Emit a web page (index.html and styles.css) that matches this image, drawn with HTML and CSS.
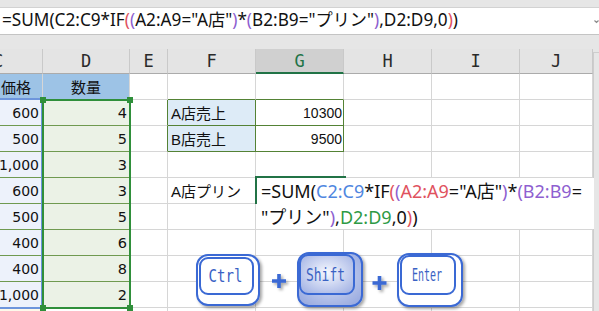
FILE: index.html
```html
<!DOCTYPE html>
<html lang="ja">
<head>
<meta charset="utf-8">
<title>Excel 配列数式</title>
<link rel="stylesheet" href="styles.css">
</head>
<body>
<div class="app">
  <div class="fbar">
    <div class="ftext">=SUM(C2:C9*IF<span class="r-r">(</span><span class="r-p">(</span>A2:A9="A店"<span class="r-p">)</span>*<span class="r-p">(</span>B2:B9="プリン"<span class="r-p">)</span>,D2:D9,0<span class="r-r">)</span>)</div>
    <svg class="fexp" width="5" height="6" viewBox="0 0 5 6"><path d="M0.5 1.5 L2.5 3.5 L4.5 1.5" fill="none" stroke="#8a8a8a" stroke-width="1.2"/></svg>
  </div>
  <div class="sheet">
    <div class="grid">
      <div class="hd hd-c"><span>C</span></div>
      <div class="hd">D</div>
      <div class="hd">E</div>
      <div class="hd">F</div>
      <div class="hd hd-act">G</div>
      <div class="hd">H</div>
      <div class="hd">I</div>
      <div class="hd">J</div>

      <div class="c th th-c">価格</div>
      <div class="c th th-d">数量</div>
      <div class="c"></div>
      <div class="c tt"></div>
      <div class="c tt"></div>
      <div class="c"></div>
      <div class="c"></div>
      <div class="c"></div>

      <div class="c cc">600</div>
      <div class="c cd">4</div>
      <div class="c tl"></div>
      <div class="c tb tbl">A店売上</div>
      <div class="c tb gnum">10300</div>
      <div class="c"></div>
      <div class="c"></div>
      <div class="c"></div>

      <div class="c cc">500</div>
      <div class="c cd">5</div>
      <div class="c tl"></div>
      <div class="c tb tbl">B店売上</div>
      <div class="c tb gnum">9500</div>
      <div class="c"></div>
      <div class="c"></div>
      <div class="c"></div>

      <div class="c cc">1,000</div>
      <div class="c cd">3</div>
      <div class="c"></div>
      <div class="c"></div>
      <div class="c"></div>
      <div class="c"></div>
      <div class="c"></div>
      <div class="c"></div>

      <div class="c cc">600</div>
      <div class="c cd">3</div>
      <div class="c"></div>
      <div class="c">A店プリン</div>
      <div class="c"></div>
      <div class="c"></div>
      <div class="c"></div>
      <div class="c"></div>

      <div class="c cc">500</div>
      <div class="c cd">5</div>
      <div class="c"></div>
      <div class="c"></div>
      <div class="c"></div>
      <div class="c"></div>
      <div class="c"></div>
      <div class="c"></div>

      <div class="c cc">400</div>
      <div class="c cd">6</div>
      <div class="c"></div>
      <div class="c"></div>
      <div class="c"></div>
      <div class="c"></div>
      <div class="c"></div>
      <div class="c"></div>

      <div class="c cc">400</div>
      <div class="c cd">8</div>
      <div class="c"></div>
      <div class="c"></div>
      <div class="c"></div>
      <div class="c"></div>
      <div class="c"></div>
      <div class="c"></div>

      <div class="c cc">1,000</div>
      <div class="c cd">2</div>
      <div class="c"></div>
      <div class="c"></div>
      <div class="c"></div>
      <div class="c"></div>
      <div class="c"></div>
      <div class="c"></div>

      <div class="c c-next"></div>
      <div class="c"></div>
      <div class="c"></div>
      <div class="c"></div>
      <div class="c"></div>
      <div class="c"></div>
      <div class="c"></div>
      <div class="c"></div>
    </div>
    <div class="vscroll"></div>
  </div>

  <div class="ref ref-c"></div>
  <div class="ref ref-d">
    <i class="hdl h-tl"></i><i class="hdl h-tr"></i><i class="hdl h-bl"></i><i class="hdl h-br"></i>
  </div>
  <div class="active"></div>
  <div class="edit">=SUM(<span class="r-b">C2:C9</span>*IF<span class="r-r">(</span><span class="r-p">(</span><span class="r-r">A2:A9</span>="A店"<span class="r-p">)</span>*<span class="r-p">(</span><span class="r-p">B2:B9</span>=<br>"プリン"<span class="r-p">)</span>,<span class="r-g">D2:D9</span>,0<span class="r-r">)</span>)</div>

  <svg class="keys" width="272" height="60" viewBox="0 0 272 60">
    <defs>
      <filter id="sh" x="-20%" y="-20%" width="150%" height="150%">
        <feDropShadow dx="2" dy="2" stdDeviation="1.6" flood-color="#000" flood-opacity="0.35"/>
      </filter>
      <radialGradient id="sg" cx="50%" cy="45%" r="62%">
        <stop offset="0" stop-color="#f6f8fe"/>
        <stop offset="1" stop-color="#a8b7e6"/>
      </radialGradient>
      <radialGradient id="sg2" cx="50%" cy="45%" r="65%">
        <stop offset="0" stop-color="#dae2f7"/>
        <stop offset="1" stop-color="#9aabe0"/>
      </radialGradient>
    </defs>
    <!-- Ctrl -->
    <rect x="3" y="5" width="62" height="50" rx="11" fill="#fff" stroke="#3a69d4" stroke-width="2" filter="url(#sh)"/>
    <rect x="6" y="8" width="53" height="36" rx="8" fill="#fff" stroke="#3a69d4" stroke-width="2"/>
    <text class="ktext" x="31.5" y="32" text-anchor="middle" textLength="34" lengthAdjust="spacingAndGlyphs">Ctrl</text>
    <!-- plus -->
    <path d="M78 31h14M85 24v14" stroke="#3a69d4" stroke-width="3.6" filter="url(#sh)"/>
    <!-- Shift -->
    <rect x="104" y="3" width="64" height="53" rx="11" fill="url(#sg2)" stroke="#3a69d4" stroke-width="2" filter="url(#sh)"/>
    <rect x="106" y="5" width="54" height="39" rx="8" fill="url(#sg)" stroke="#3a69d4" stroke-width="2"/>
    <text class="ktext" x="131.5" y="31" text-anchor="middle" textLength="39" lengthAdjust="spacingAndGlyphs">Shift</text>
    <!-- plus -->
    <path d="M178.5 33h14M185.5 26v14" stroke="#3a69d4" stroke-width="3.6" filter="url(#sh)"/>
    <!-- Enter -->
    <rect x="204" y="4" width="64" height="52" rx="11" fill="#fff" stroke="#3a69d4" stroke-width="2" filter="url(#sh)"/>
    <rect x="207" y="6" width="54" height="38" rx="8" fill="#fff" stroke="#3a69d4" stroke-width="2"/>
    <text class="ktext kenter" x="233" y="30.5" text-anchor="middle" textLength="30" lengthAdjust="spacingAndGlyphs">Enter</text>
  </svg>
</div>
</body>
</html>
```

FILE: styles.css
```css
html, body {
  margin: 0;
  padding: 0;
  height: 100%;
  overflow: hidden;
}

body {
  background: #e6e6e6;
}

.app {
  position: relative;
  width: 599px;
  height: 311px;
  overflow: hidden;
}

/* formula bar */
.fbar {
  margin-top: 7px;
  height: 28px;
  box-sizing: border-box;
  background: #fff;
  border-top: 1px solid #d2d2d2;
  border-bottom: 1px solid #c4c4c4;
  display: flex;
  align-items: flex-start;
  padding-left: 2px;
}

.ftext {
  font: 17.2px "Noto Sans", "Noto Sans CJK JP", sans-serif;
  line-height: 24px;
  white-space: nowrap;
  color: #111;
}

.fexp {
  margin-left: auto;
  margin-top: 11px;
}

/* sheet */
.sheet {
  margin-top: 14px;
  display: flex;
}

.grid {
  display: grid;
  grid-template-columns: 43px 87px 38px 88px 88px 88px 88px 73px;
  grid-template-rows: 25px;
  grid-auto-rows: 26px;
  width: 593px;
  flex: none;
}

.vscroll {
  flex: 1;
  margin-top: 3px;
  border-left: 1px solid #cdcdcd;
  border-top: 1px solid #cdcdcd;
}

.hd {
  box-sizing: border-box;
  background: #e4e4e4;
  border-right: 1px solid #c9c9c9;
  border-bottom: 1px solid #ababab;
  display: flex;
  align-items: center;
  justify-content: center;
  font: 17px "DejaVu Sans Mono", monospace;
  color: #2a2a2a;
  overflow: hidden;
}

.hd-c {
  justify-content: flex-start;
}

.hd-c span {
  margin-left: -7px;
}

.hd-act {
  background: #d0d0d0;
  color: #217346;
  border-bottom: 2px solid #217346;
}

.c {
  box-sizing: border-box;
  border-right: 1px solid #d6d6d6;
  border-bottom: 1px solid #d6d6d6;
  background: #fff;
  display: flex;
  align-items: center;
  padding: 0 3px;
  font: 15px "Liberation Sans", "Noto Sans CJK JP", sans-serif;
  color: #111;
  white-space: nowrap;
  overflow: hidden;
}

.th {
  background: #9dc3e6;
  border-bottom-color: #6f9a50;
}

.th-c {
  padding-left: 1px;
}

.th-d {
  justify-content: center;
}

.cc, .cd {
  justify-content: flex-end;
  font-family: "DejaVu Sans", sans-serif;
  font-size: 14px;
  border-bottom-color: #6f9a50;
}

.cc {
  background: #edf2fb;
  padding-left: 0;
  padding-right: 3px;
}

.cd {
  background: #ebf2e6;
  padding-right: 2px;
  font-size: 14.5px;
}

.c-next {
  background: #fdf9ea;
}

.tb {
  border-right-color: #548235;
  border-bottom-color: #548235;
}

.tbl {
  background: #ddebf7;
}

.tl {
  border-right-color: #548235;
}

.tt {
  border-bottom-color: #548235;
}

.gnum {
  justify-content: flex-end;
  font-size: 14px;
  padding-right: 1px;
}

/* reference highlights drawn over the grid */
.ref {
  position: absolute;
  box-sizing: border-box;
}

.ref-c {
  left: -3px;
  top: 98px;
  width: 46px;
  height: 211px;
  border: 2px solid #6d95dc;
}

.ref-d {
  left: 42px;
  top: 99px;
  width: 89px;
  height: 210px;
  border: 2px solid #2f8f3a;
}

.hdl {
  position: absolute;
  width: 6px;
  height: 6px;
  background: #2f8f3a;
}

.h-tl { left: -4px; top: -4px; }
.h-tr { right: -4px; top: -4px; }
.h-bl { left: -4px; bottom: -4px; }
.h-br { right: -4px; bottom: -4px; }

/* active cell & in-cell editor */
.active {
  position: absolute;
  left: 255px;
  top: 176px;
  width: 91px;
  height: 28px;
  box-sizing: border-box;
  border-top: 2px solid #217346;
  border-left: 2px solid #217346;
}

.edit {
  position: absolute;
  left: 257px;
  top: 178px;
  width: 337px;
  height: 51px;
  background: #fff;
  padding-left: 4px;
  box-sizing: border-box;
  font: 18px "Noto Sans", "Noto Sans CJK JP", sans-serif;
  line-height: 26px;
  white-space: nowrap;
  overflow: hidden;
  color: #111;
}

.r-b { color: #4f86e0; }
.r-r { color: #e0525e; }
.r-p { color: #8e5fd0; }
.r-g { color: #2e9a45; }

/* keyboard keys */
.keys {
  position: absolute;
  left: 194px;
  top: 250px;
  overflow: visible;
}

.ktext {
  font: 17px "DejaVu Sans Mono", monospace;
  fill: #3a62c4;
}

.kenter {
  font-size: 18.5px;
}
```
